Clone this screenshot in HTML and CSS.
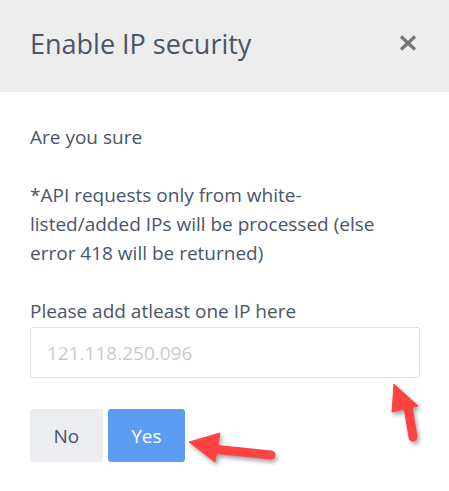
FILE: index.html
```html
<!DOCTYPE html>
<html lang="en">
  <head>
    <meta charset="UTF-8" />
    <meta name="viewport" content="width=device-width, initial-scale=1.0" />
    <title>Enable IP security</title>
    <link rel="stylesheet" href="styles.css">
  </head>
  <body>
    <div class="modal">
      <div class="modal-header">
        <h2>Enable IP security</h2>
        <button class="close" aria-label="Close">
          <svg width="18" height="16" viewBox="0 0 18 16">
            <path d="M2 1.5 L16 14.5 M16 1.5 L2 14.5" stroke="#767676" stroke-width="3.2" fill="none" />
          </svg>
        </button>
      </div>

      <div class="modal-body">
        <p>Are you sure</p>
        <p class="note">*API requests only from white-listed/added IPs will be processed (else error 418 will be returned)</p>

        <label for="ip">Please add atleast one IP here</label>
        <input type="text" id="ip" placeholder="121.118.250.096" />

        <div class="actions">
          <button class="btn btn-no">No</button>
          <button class="btn btn-yes">Yes</button>
        </div>
      </div>
    </div>

    <!-- annotation arrows drawn over the screenshot -->
    <svg class="arrows" width="449" height="491" viewBox="0 0 449 491">
      <g fill="#ff4343" stroke="#ff4343" stroke-linejoin="round">
        <line x1="408" y1="407" x2="413" y2="437" stroke-width="9" stroke-linecap="round" />
        <polygon points="394,384 418,406 392,412" stroke-width="1" />
        <line x1="212" y1="449" x2="271" y2="455" stroke-width="9" stroke-linecap="round" />
        <polygon points="189,442 220,433 215,462" stroke-width="1" />
      </g>
    </svg>
  </body>
</html>
```

FILE: styles.css
```css
body {
  margin: 0;
  background: #ffffff;
  font-family: "Open Sans", "Noto Sans", sans-serif;
  color: #4a5568;
  position: relative;
}

.modal {
  width: 449px;
}

.modal-header {
  display: flex;
  align-items: flex-start;
  height: 92px;
  box-sizing: border-box;
  padding: 28px 32px 0 30px;
  background: #ededed;
}

.modal-header h2 {
  margin: 0;
  font-size: 27px;
  font-weight: 400;
  line-height: 32px;
  color: #4a5568;
}

.close {
  margin-left: auto;
  margin-top: 7px;
  padding: 0;
  border: none;
  background: none;
  line-height: 0;
}

.modal-body {
  padding: 31px 29px 30px 30px;
  font-size: 19px;
  line-height: 29px;
}

.modal-body p {
  margin: 0 0 29px;
}

.modal-body .note {
  max-width: 362px;
}

.modal-body label {
  display: block;
}

.modal-body input {
  display: block;
  width: 100%;
  height: 51px;
  box-sizing: border-box;
  margin-top: 1px;
  padding: 0 16px;
  border: 1px solid #dde1e6;
  border-radius: 3px;
  font-family: inherit;
  font-size: 19px;
  color: #4a5568;
}

.modal-body input::placeholder {
  color: #c6cbd3;
}

.actions {
  display: flex;
  gap: 5px;
  margin-top: 31px;
}

.btn {
  height: 53px;
  padding: 0 23.5px;
  border: none;
  border-radius: 3px;
  font-family: inherit;
  font-size: 19px;
}

.btn-no {
  background: #ebedf0;
  color: #4a5568;
}

.btn-yes {
  background: #5c9df3;
  color: #ffffff;
}

.arrows {
  position: absolute;
  top: 0;
  left: 0;
  pointer-events: none;
  filter: drop-shadow(2px 3px 2px rgba(0, 0, 0, 0.35));
}
```
